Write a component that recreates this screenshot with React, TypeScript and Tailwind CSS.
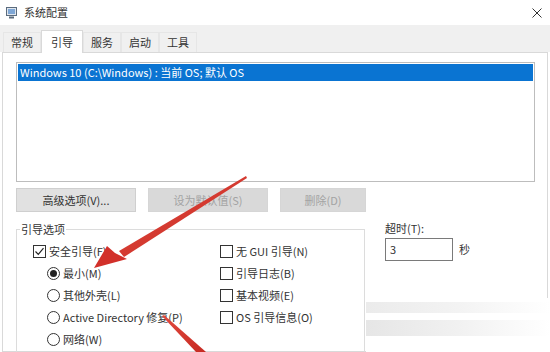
import React from 'react'

const font = { fontFamily: '"Segoe UI", "Noto Sans CJK SC", "Noto Sans", sans-serif' }

function Check({ checked, label }: { checked?: boolean; label: string }) {
  return (
    <div className="flex h-[22px] items-center gap-[3px]">
      <span className="flex h-[13px] w-[13px] items-center justify-center border border-[#333] bg-white">
        {checked && (
          <svg width="11" height="11" viewBox="0 0 11 11">
            <path d="M1.5 5.5 L4.3 8.3 L9.5 2.2" fill="none" stroke="#222" strokeWidth="1.2" />
          </svg>
        )}
      </span>
      <span>{label}</span>
    </div>
  )
}

function Radio({ checked, label }: { checked?: boolean; label: string }) {
  return (
    <div className="flex h-[22px] items-center gap-[3px]">
      <span className="flex h-[13px] w-[13px] items-center justify-center rounded-full border border-[#333] bg-white">
        {checked && <span className="h-[7px] w-[7px] rounded-full bg-[#222]" />}
      </span>
      <span>{label}</span>
    </div>
  )
}

export default function App() {
  const tabs = ['常规', '引导', '服务', '启动', '工具']

  return (
    <div className="relative h-[352px] w-[550px] overflow-hidden bg-white text-[11px] text-[#333]" style={font}>
      {/* 标题栏 */}
      <div className="flex h-[25px] items-center px-[6px]">
        <svg width="12" height="12" viewBox="0 0 12 12">
          <rect x="0.5" y="0.5" width="10" height="8" fill="#dfe6ee" stroke="#5b6b7d" />
          <rect x="2" y="2" width="7" height="5" fill="#7fa7d6" />
          <rect x="3" y="9.5" width="5" height="2" fill="#5b6b7d" />
        </svg>
        <span className="ml-[6px]">系统配置</span>
        <svg className="ml-auto mr-[2px]" width="10" height="10" viewBox="0 0 10 10">
          <path d="M0.5 0.5 L9.5 9.5 M9.5 0.5 L0.5 9.5" stroke="#333" strokeWidth="1" />
        </svg>
      </div>

      {/* 选项卡 */}
      <div className="flex h-[27px] items-end bg-[#f0f0f0] pl-[3px]">
        {tabs.map((t, i) =>
          i === 1 ? (
            <div key={t} className="-mb-px flex h-[23px] w-[42px] items-center justify-center border border-b-0 border-[#d9d9d9] bg-white">
              {t}
            </div>
          ) : (
            <div key={t} className="flex h-[20px] w-[38px] items-center justify-center border border-b-0 border-[#e6e6e6]">
              {t}
            </div>
          )
        )}
      </div>

      {/* 面板 */}
      <div className="mx-[2px] h-[300px] border border-[#d9d9d9] bg-white px-[13px] pt-[9px]">
        <div className="h-[120px] w-[519px] border border-[#bdbdbd] bg-white p-px">
          <div className="flex h-[17px] items-center bg-[#0a74d2] pl-[2px] text-white">
            Windows 10 (C:\Windows) : 当前 OS; 默认 OS
          </div>
        </div>

        <div className="mt-[6px] flex gap-[12px]">
          <div className="flex h-[24px] w-[120px] items-center justify-center border border-[#cfcfcf] bg-[#e1e1e1]">
            高级选项(V)...
          </div>
          <div className="flex h-[24px] w-[120px] items-center justify-center border border-[#d6d6d6] bg-[#d9d9d9] text-[#a3a3a3]">
            设为默认值(S)
          </div>
          <div className="flex h-[24px] w-[86px] items-center justify-center border border-[#d6d6d6] bg-[#d9d9d9] text-[#a3a3a3]">
            删除(D)
          </div>
        </div>

        <div className="mt-[9px] flex">
          <fieldset className="h-[150px] w-[349px] border border-[#dcdcdc] pt-[3px]">
            <legend className="ml-[3px] px-px">引导选项</legend>
            <div className="flex pl-[16px]">
              <div className="w-[187px]">
                <Check checked label="安全引导(F)" />
                <div className="pl-[14px]">
                  <Radio checked label="最小(M)" />
                  <Radio label="其他外壳(L)" />
                  <Radio label="Active Directory 修复(P)" />
                  <Radio label="网络(W)" />
                </div>
              </div>
              <div>
                <Check label="无 GUI 引导(N)" />
                <Check label="引导日志(B)" />
                <Check label="基本视频(E)" />
                <Check label="OS 引导信息(O)" />
              </div>
            </div>
          </fieldset>

          <div className="ml-[20px] flex flex-col">
            <span className="leading-[15px]">超时(T):</span>
            <div className="mt-[2px] flex items-center">
              <div className="flex h-[23px] w-[68px] items-center border border-[#7a7a7a] bg-white pl-[4px]">3</div>
              <span className="ml-[6px]">秒</span>
            </div>
          </div>
        </div>
      </div>

      {/* 底部模糊区域 */}
      <div className="absolute left-[366px] top-[298px] h-[54px] w-[184px] bg-white">
        <div className="mt-[4px] h-[11px] w-full bg-gradient-to-r from-[#ebebeb] via-[#f3f3f3] to-white" />
        <div className="mt-[7px] h-[16px] w-full bg-gradient-to-r from-[#e6e6e6] via-[#f1f1f1] to-white" />
      </div>

      {/* 红色箭头 */}
      <svg className="pointer-events-none absolute left-0 top-0" width="550" height="352" viewBox="0 0 550 352">
        <defs>
          <linearGradient id="red1" x1="0" y1="0" x2="1" y2="1">
            <stop offset="0" stopColor="#e24a3f" />
            <stop offset="1" stopColor="#c62a22" />
          </linearGradient>
        </defs>
        <polygon points="246,176 247,178 124,257 119,251" fill="url(#red1)" />
        <polygon points="94,268 107,246 115,253 127,259" fill="#d2302a" />
        <polygon points="162,316 164,315 206,352 196,352" fill="url(#red1)" />
      </svg>
    </div>
  )
}
